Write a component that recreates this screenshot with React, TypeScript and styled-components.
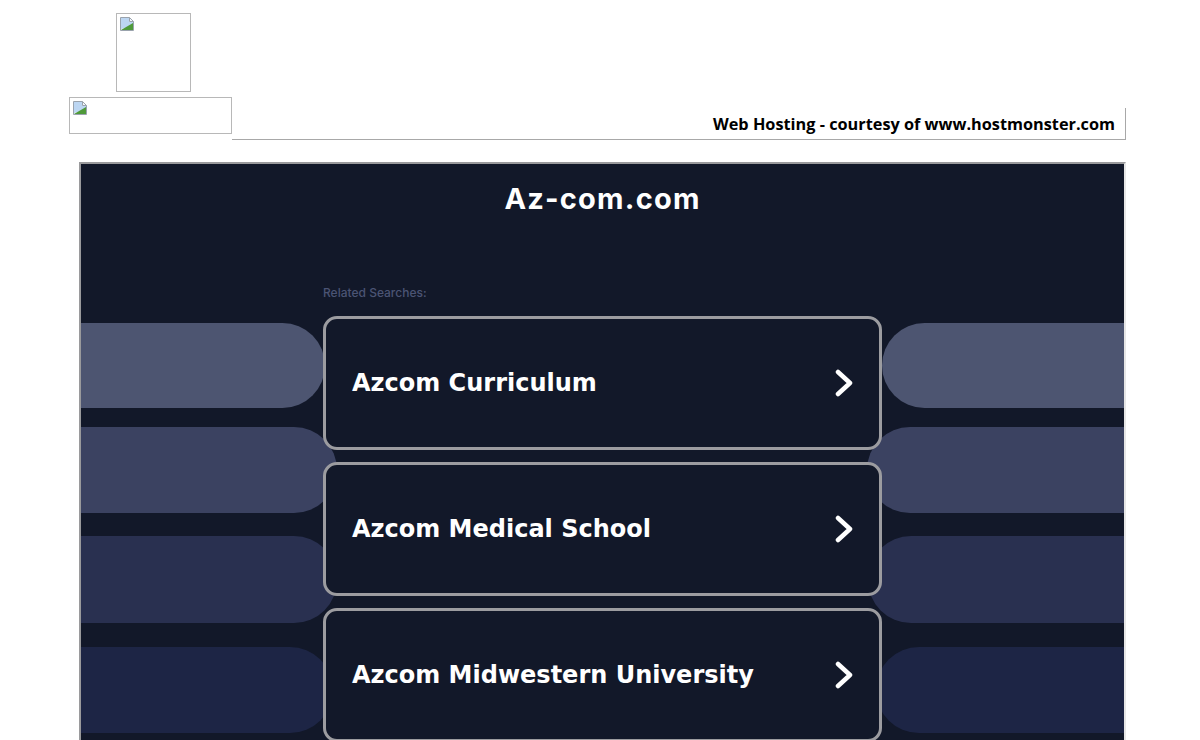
import React from 'react';
import styled, { createGlobalStyle } from 'styled-components';

const GlobalStyle = createGlobalStyle`
  html, body {
    overflow: hidden;
  }
  body {
    margin: 8px;
    background: #ffffff;
    font-family: "Open Sans", "Liberation Sans", sans-serif;
  }
`;

const searches = ['Azcom Curriculum', 'Azcom Medical School', 'Azcom Midwestern University'];

// gap = space above the band, height = band thickness
const bands = [
  { color: '#4d5571', left: 244, right: 242, gap: 0, height: 85 },
  { color: '#3b4261', left: 256, right: 257, gap: 19, height: 86 },
  { color: '#293050', left: 256, right: 256, gap: 23, height: 87 },
  { color: '#1d2545', left: 252, right: 248, gap: 24, height: 86 },
];

const BrokenIcon = () => (
  <svg width="16" height="16" viewBox="0 0 16 16">
    <path d="M1.5 1.5h9l4 4v9h-13z" fill="#f4f7fb" stroke="#9aa3ad" />
    <path d="M2 2h8v4h4v4L2 13z" fill="#bcd6f2" />
    <path d="M2 14l12-7v7z" fill="#4f9a3a" />
    <path d="M10.5 1.5v4h4" fill="none" stroke="#9aa3ad" />
  </svg>
);

const Chevron = () => (
  <svg width="18" height="28" viewBox="0 0 18 28">
    <polyline
      points="3,3 15,14 3,25"
      fill="none"
      stroke="#ffffff"
      strokeWidth="4.5"
      strokeLinecap="round"
      strokeLinejoin="round"
    />
  </svg>
);

const App = () => {
  return (
    <>
      <GlobalStyle />
      <TopRow>
        <ImageBox $w={75} $h={79}>
          <BrokenIcon />
        </ImageBox>
      </TopRow>
      <HostRow>
        <ImageBox $w={163} $h={37}>
          <BrokenIcon />
        </ImageBox>
        <HostCell>Web Hosting - courtesy of www.hostmonster.com</HostCell>
      </HostRow>
      <Frame>
        <Title>Az-com.com</Title>
        <Stage>
          <BandLayer>
            {bands.map((b, i) => (
              <BandRow key={i} $gap={b.gap} $height={b.height}>
                <Band $color={b.color} $width={b.left} $side="left" />
                <Band $color={b.color} $width={b.right} $side="right" />
              </BandRow>
            ))}
          </BandLayer>
          <CardLayer>
            <CardColumn>
              <Related>Related Searches:</Related>
              {searches.map((s) => (
                <Card key={s}>
                  <CardText>{s}</CardText>
                  <Chevron />
                </Card>
              ))}
            </CardColumn>
          </CardLayer>
        </Stage>
      </Frame>
    </>
  );
};

const TopRow = styled.div`
  display: flex;
  padding-left: 108px;
  margin-top: 5px;
`;

const ImageBox = styled.div<{ $w: number; $h: number }>`
  width: ${(p) => p.$w - 4}px;
  height: ${(p) => p.$h - 4}px;
  border: 1px solid #b8b8b8;
  padding: 2px 0 0 2px;
  box-sizing: content-box;
  flex-shrink: 0;
  svg {
    display: block;
  }
`;

const HostRow = styled.div`
  display: flex;
  align-items: flex-start;
  margin-top: 5px;
  padding-left: 61px;
`;

const HostCell = styled.div`
  margin-top: 11px;
  width: 894px;
  height: 32px;
  line-height: 33px;
  text-align: right;
  padding-right: 10px;
  box-sizing: border-box;
  border-right: 1px solid #a8a8a8;
  border-bottom: 1px solid #a8a8a8;
  font-family: "Open Sans", "Liberation Sans", sans-serif;
  font-weight: 700;
  font-size: 16.3px;
  color: #000000;
`;

const Frame = styled.div`
  margin: 22px 0 0 71px;
  width: 1047px;
  height: 620px;
  box-sizing: border-box;
  border: 2px solid;
  border-color: #9a9a9c #e6e6e6 #e6e6e6 #9a9a9c;
  background: #121829;
  overflow: hidden;
`;

const Title = styled.h1`
  margin: 17px 0 0;
  text-align: center;
  line-height: 36px;
  font-family: Inter, "Liberation Sans", sans-serif;
  font-weight: 700;
  font-size: 29px;
  letter-spacing: 1.2px;
  color: #ffffff;
`;

const Stage = styled.div`
  display: grid;
  margin-top: 54px;
`;

const BandLayer = styled.div`
  grid-area: 1 / 1;
  display: flex;
  flex-direction: column;
  padding-top: 52px;
`;

const BandRow = styled.div<{ $gap: number; $height: number }>`
  display: flex;
  justify-content: space-between;
  margin-top: ${(p) => p.$gap}px;
  height: ${(p) => p.$height}px;
`;

const Band = styled.div<{ $color: string; $width: number; $side: 'left' | 'right' }>`
  width: ${(p) => p.$width}px;
  background: ${(p) => p.$color};
  border-radius: ${(p) => (p.$side === 'left' ? '0 43px 43px 0' : '43px 0 0 43px')};
`;

const CardLayer = styled.div`
  grid-area: 1 / 1;
  display: flex;
  justify-content: center;
  padding-top: 15px;
`;

const CardColumn = styled.div`
  width: 559px;
  display: flex;
  flex-direction: column;
  gap: 12px;
`;

const Related = styled.div`
  font-family: Inter, "Liberation Sans", sans-serif;
  font-size: 12px;
  font-weight: 500;
  line-height: 14px;
  color: #4b5474;
  margin-bottom: 4px;
`;

const Card = styled.div`
  height: 134px;
  box-sizing: border-box;
  border: 3px solid #9c9ca0;
  border-radius: 14px;
  background: #121829;
  display: flex;
  align-items: center;
  justify-content: space-between;
  padding: 0 26px;
`;

const CardText = styled.span`
  font-family: "DejaVu Sans", Verdana, sans-serif;
  font-weight: 700;
  font-size: 24px;
  color: #ffffff;
`;

export default App;
